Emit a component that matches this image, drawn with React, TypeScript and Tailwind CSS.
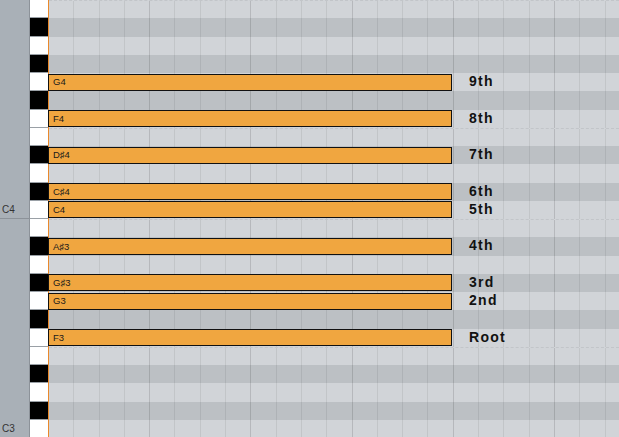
import React from 'react';

const NAMES = ['B', 'A#', 'A', 'G#', 'G', 'F#', 'F', 'E', 'D#', 'D', 'C#', 'C'];

interface Row {
  pitch: string;
  black: boolean;
  name: string;
}

const rows: Row[] = [4, 3].flatMap((oct) =>
  NAMES.map((n) => ({ pitch: n + oct, name: n, black: n.includes('#') }))
);

// chord tones laid on the roll
const chord: Record<string, string> = {
  G4: '9th',
  F4: '8th',
  'D#4': '7th',
  'C#4': '6th',
  C4: '5th',
  'A#3': '4th',
  'G#3': '3rd',
  G3: '2nd',
  F3: 'Root',
};

const CELLS = Array.from({ length: 23 }, (_, i) => i);

const App: React.FC = () => {
  return (
    <div className="flex w-[619px] h-[437px] overflow-hidden bg-[#d1d4d8] font-['Liberation_Sans',Arial,sans-serif]">
      {/* octave ruler */}
      <div className="w-[30px] shrink-0 bg-[#a9b0b7] border-r border-[#8c9299]">
        {rows.map((r) => (
          <div
            key={r.pitch}
            className={`h-[18.25px] flex items-end pl-[2px] pb-[3px] text-[10px] leading-none text-[#333] ${
              r.name === 'C' ? 'border-b border-[#8c9299]' : ''
            }`}
          >
            {r.name === 'C' ? r.pitch : ''}
          </div>
        ))}
      </div>

      {/* keyboard */}
      <div className="w-[18px] shrink-0">
        {rows.map((r) => (
          <div
            key={r.pitch}
            className={`h-[18.25px] border-b border-[#9aa0a6] ${r.black ? 'bg-black' : 'bg-white'}`}
          />
        ))}
      </div>

      <div className="w-[1px] shrink-0 bg-[#ea892b]" />

      {/* note grid */}
      <div className="flex-1 min-w-0">
        {rows.map((r) => {
          const tone = chord[r.pitch];
          return (
            <div
              key={r.pitch}
              className={`relative flex h-[18.25px] ${r.black ? 'bg-[#bcc0c4]' : 'bg-[#d1d4d8]'} ${
                r.name === 'B' || r.name === 'E' ? 'border-t border-dashed border-[#c2c5c9]' : ''
              }`}
            >
              {CELLS.map((c) => (
                <div
                  key={c}
                  className={`w-[25.3px] shrink-0 border-r ${
                    c % 4 === 3 ? 'border-black/[0.13]' : 'border-black/[0.07]'
                  }`}
                />
              ))}
              {tone && (
                <>
                  <div className="absolute left-[-1px] top-[0.5px] h-[17px] w-[404px] flex items-center pl-[4px] bg-[#f0a640] border border-[#111] text-[9.5px] leading-none text-[#1a1a1a]">
                    {r.pitch.replace('#', '♯')}
                  </div>
                  <div className="absolute left-[420px] top-[-1px] h-full flex items-center text-[14px] font-bold tracking-[1.3px] leading-none text-[#111]">
                    {tone}
                  </div>
                </>
              )}
            </div>
          );
        })}
      </div>
    </div>
  );
};

export default App;
